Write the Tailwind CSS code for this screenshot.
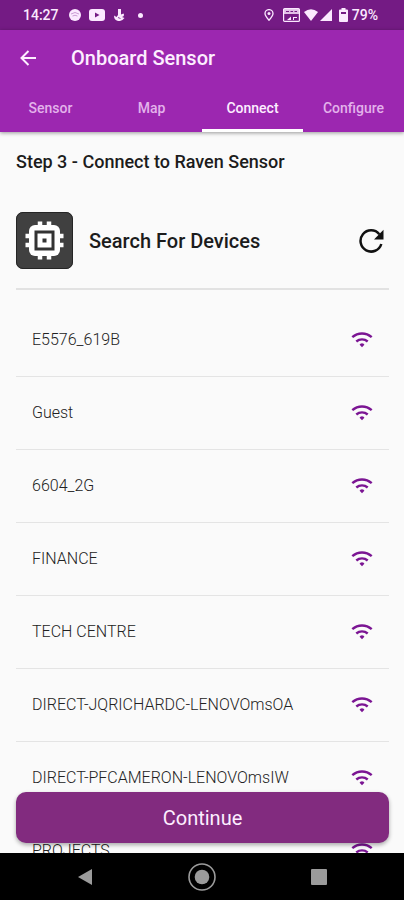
<!DOCTYPE html>
<html lang="en">
<head>
<meta charset="utf-8">
<meta name="viewport" content="width=device-width, initial-scale=1">
<title>Onboard Sensor</title>
<script src="https://cdn.jsdelivr.net/npm/@tailwindcss/browser@4"></script>
</head>
<body class="flex h-screen flex-col overflow-hidden bg-[#fafafa] font-[Roboto,'Liberation_Sans',sans-serif] text-[#1c1c1c]">
<svg class="hidden" aria-hidden="true">
  <symbol id="wifi" viewBox="0 0 22 16">
    <path d="M1.300 5.200C7 .2 15 .2 20.700 5.200" fill="none" stroke="currentColor" stroke-width="2.400"/>
    <path d="M5.300 9.500C8.600 6.600 13.400 6.600 16.700 9.500" fill="none" stroke="currentColor" stroke-width="2.400"/>
    <path d="M11 15.300L8.600 12.800Q9 11.300 11 11.300T13.400 12.800Z" fill="currentColor"/>
  </symbol>
</svg>

<div class="flex h-[30px] shrink-0 items-center bg-[#741b84] pl-[23px] pr-[26px] text-sm font-medium text-[#fbe9ff]">
  <span>14:27</span>
  <div class="ml-[10px] flex items-center gap-2">
    <svg class="size-3" viewBox="0 0 12 12"><circle cx="6" cy="6" r="6" fill="currentColor"/><path d="M2 5Q6 2 10 5M3.500 7Q6 5.500 8.500 7" fill="none" stroke="#b67bc1" stroke-width=".7"/></svg>
    <svg class="h-3 w-4" viewBox="0 0 16 12"><rect width="16" height="12" rx="3" fill="currentColor"/><path d="M6 3.500L10.500 6L6 8.500Z" fill="#741b84"/></svg>
    <svg class="h-3 w-[13px]" viewBox="0 0 13 12"><path d="M5 0H8V5.500L10.500 4.500Q12 7 9 8L11.500 9Q9 12.500 5 12Q1 11 1 6.500L3.500 8L5 6Z" fill="currentColor"/><path d="M5 8.500L7.500 9.500" stroke="#741b84" stroke-width=".8"/></svg>
    <span class="ml-1 size-[5px] rounded-full bg-current"></span>
  </div>
  <div class="ml-auto flex items-center">
    <svg class="mr-[9px] h-3 w-[10px]" viewBox="0 0 10 12"><path d="M5 11.200Q1 7 1 4.600A4 4 0 0 1 9 4.600Q9 7 5 11.200Z" fill="none" stroke="currentColor" stroke-width="1.300"/><circle cx="5" cy="4.500" r="1.500" fill="currentColor"/></svg>
    <svg class="mr-1 h-[14px] w-[17px]" viewBox="0 0 17 14"><rect x=".6" y=".6" width="15.800" height="12.800" rx="1" fill="none" stroke="currentColor" stroke-width="1.200"/><path d="M1 1H16V6H1Z" fill="currentColor" opacity=".8"/><path d="M3 3.500H6M7.500 3.500H10M11.500 3.500H14M2 6.500H15" stroke="#741b84"/><path d="M4 12L8 8.500V12ZM10 9H14V10H11V12H10Z" fill="currentColor"/></svg>
    <svg class="mr-[2px] h-3 w-[14px]" viewBox="0 0 14 12"><path d="M0 3Q7-2.500 14 3L7 12Z" fill="currentColor"/></svg>
    <svg class="mr-[7px] h-3 w-3" viewBox="0 0 12 12"><path d="M12 0V12H0Z" fill="currentColor"/></svg>
    <svg class="mr-1 h-[14px] w-[9px]" viewBox="0 0 9 14"><path d="M2.500 0H6.500V1.500H8Q9 1.500 9 2.500V13Q9 14 8 14H1Q0 14 0 13V2.500Q0 1.500 1 1.500H2.500Z" fill="currentColor"/><path d="M2 4H7V6H2Z" fill="#741b84"/></svg>
    <span>79%</span>
  </div>
</div>

<header class="z-10 shrink-0 bg-[#9c27b0] text-[#fdeeff] shadow-[0_1px_4px_#00000066]">
  <div class="flex h-14 items-center">
    <button type="button" aria-label="Back" class="ml-5 mr-[35px] flex">
      <svg class="size-4" viewBox="0 0 16 16" fill="none" stroke="currentColor" stroke-width="2"><path d="M16 8H1.500M8.500 1L1.500 8L8.500 15"/></svg>
    </button>
    <h1 class="text-xl font-medium">Onboard Sensor</h1>
  </div>
  <nav class="grid h-[46px] grid-cols-4 text-center text-sm font-medium text-[#e3b2eb]">
    <a href="#sensor" class="flex items-center justify-center border-b-3 border-transparent">Sensor</a>
    <a href="#map" class="flex items-center justify-center border-b-3 border-transparent">Map</a>
    <a href="#connect" aria-current="page" class="flex items-center justify-center border-b-3 border-white text-[#fdeeff]">Connect</a>
    <a href="#configure" class="flex items-center justify-center border-b-3 border-transparent">Configure</a>
  </nav>
</header>

<main class="relative min-h-0 flex-1">
  <div class="h-full overflow-hidden pl-4 pr-[15px]">
    <h2 class="pt-[18px] text-lg leading-6 font-medium">Step 3 - Connect to Raven Sensor</h2>
    <div class="mt-[38px] flex items-center border-b-2 border-[#e2e2e2] pb-[19px]">
      <svg class="size-[57px]" viewBox="0 0 57 57"><rect width="57" height="57" rx="7" fill="#404040"/><rect x=".5" y=".5" width="56" height="56" rx="6.500" fill="none" stroke="#252525"/>
        <path d="M24 9.500V47.500M33 9.500V47.500M9.500 24H47.500M9.500 33H47.500" stroke="#fff" stroke-width="4.500"/>
        <rect x="13" y="13" width="31" height="31" rx="6" fill="#fff"/>
        <rect x="20" y="20" width="17" height="17" fill="#fff" stroke="#333" stroke-width="3"/>
        <rect x="26.500" y="26.500" width="4" height="4" fill="#333"/>
      </svg>
      <h3 class="ml-4 text-xl font-medium">Search For Devices</h3>
      <button type="button" aria-label="Refresh" class="ml-auto mr-[5px] flex">
        <svg class="h-6 w-[25px]" viewBox="0 0 25 24"><path d="M20.300 5.200A10.600 10.600 0 1 0 22.300 15" fill="none" stroke="#111" stroke-width="2.500"/><path d="M24.500 .8V10.500H15Z" fill="#111"/></svg>
      </button>
    </div>
    <ul class="mt-[14px] text-base font-light text-[#222] [&_svg]:h-4 [&_svg]:w-[22px] [&_svg]:text-[#7b1593] [&>li]:flex [&>li]:h-[73px] [&>li]:items-center [&>li]:justify-between [&>li]:border-b [&>li]:border-[#e4e4e4] [&>li]:pl-4 [&>li]:pr-4">
      <li>E5576_619B<svg><use href="#wifi"/></svg></li>
      <li>Guest<svg><use href="#wifi"/></svg></li>
      <li>6604_2G<svg><use href="#wifi"/></svg></li>
      <li>FINANCE<svg><use href="#wifi"/></svg></li>
      <li>TECH CENTRE<svg><use href="#wifi"/></svg></li>
      <li>DIRECT-JQRICHARDC-LENOVOmsOA<svg><use href="#wifi"/></svg></li>
      <li>DIRECT-PFCAMERON-LENOVOmsIW<svg><use href="#wifi"/></svg></li>
      <li>PROJECTS<svg><use href="#wifi"/></svg></li>
    </ul>
  </div>
  <button type="button" class="absolute right-[15px] bottom-[10px] left-4 h-[51px] rounded-[10px] bg-[#822b7f] text-xl text-[#fdeeff] shadow-[0_2px_4px_#00000055]">Continue</button>
</main>

<footer class="flex h-[47px] shrink-0 items-center justify-between bg-black pr-[77px] pl-[78px] text-[#9b9b9b]">
  <button type="button" aria-label="Back"><svg class="h-4 w-[14px]" viewBox="0 0 14 16"><path d="M14 0V16L0 8Z" fill="currentColor"/></svg></button>
  <button type="button" aria-label="Home"><svg class="size-7" viewBox="0 0 28 28"><circle cx="14" cy="14" r="13" fill="none" stroke="currentColor" stroke-width="1.600"/><circle cx="14" cy="14" r="7.300" fill="currentColor"/></svg></button>
  <button type="button" aria-label="Recent apps"><svg class="size-4" viewBox="0 0 16 16"><rect width="16" height="16" rx="1" fill="currentColor"/></svg></button>
</footer>
</body>
</html>
